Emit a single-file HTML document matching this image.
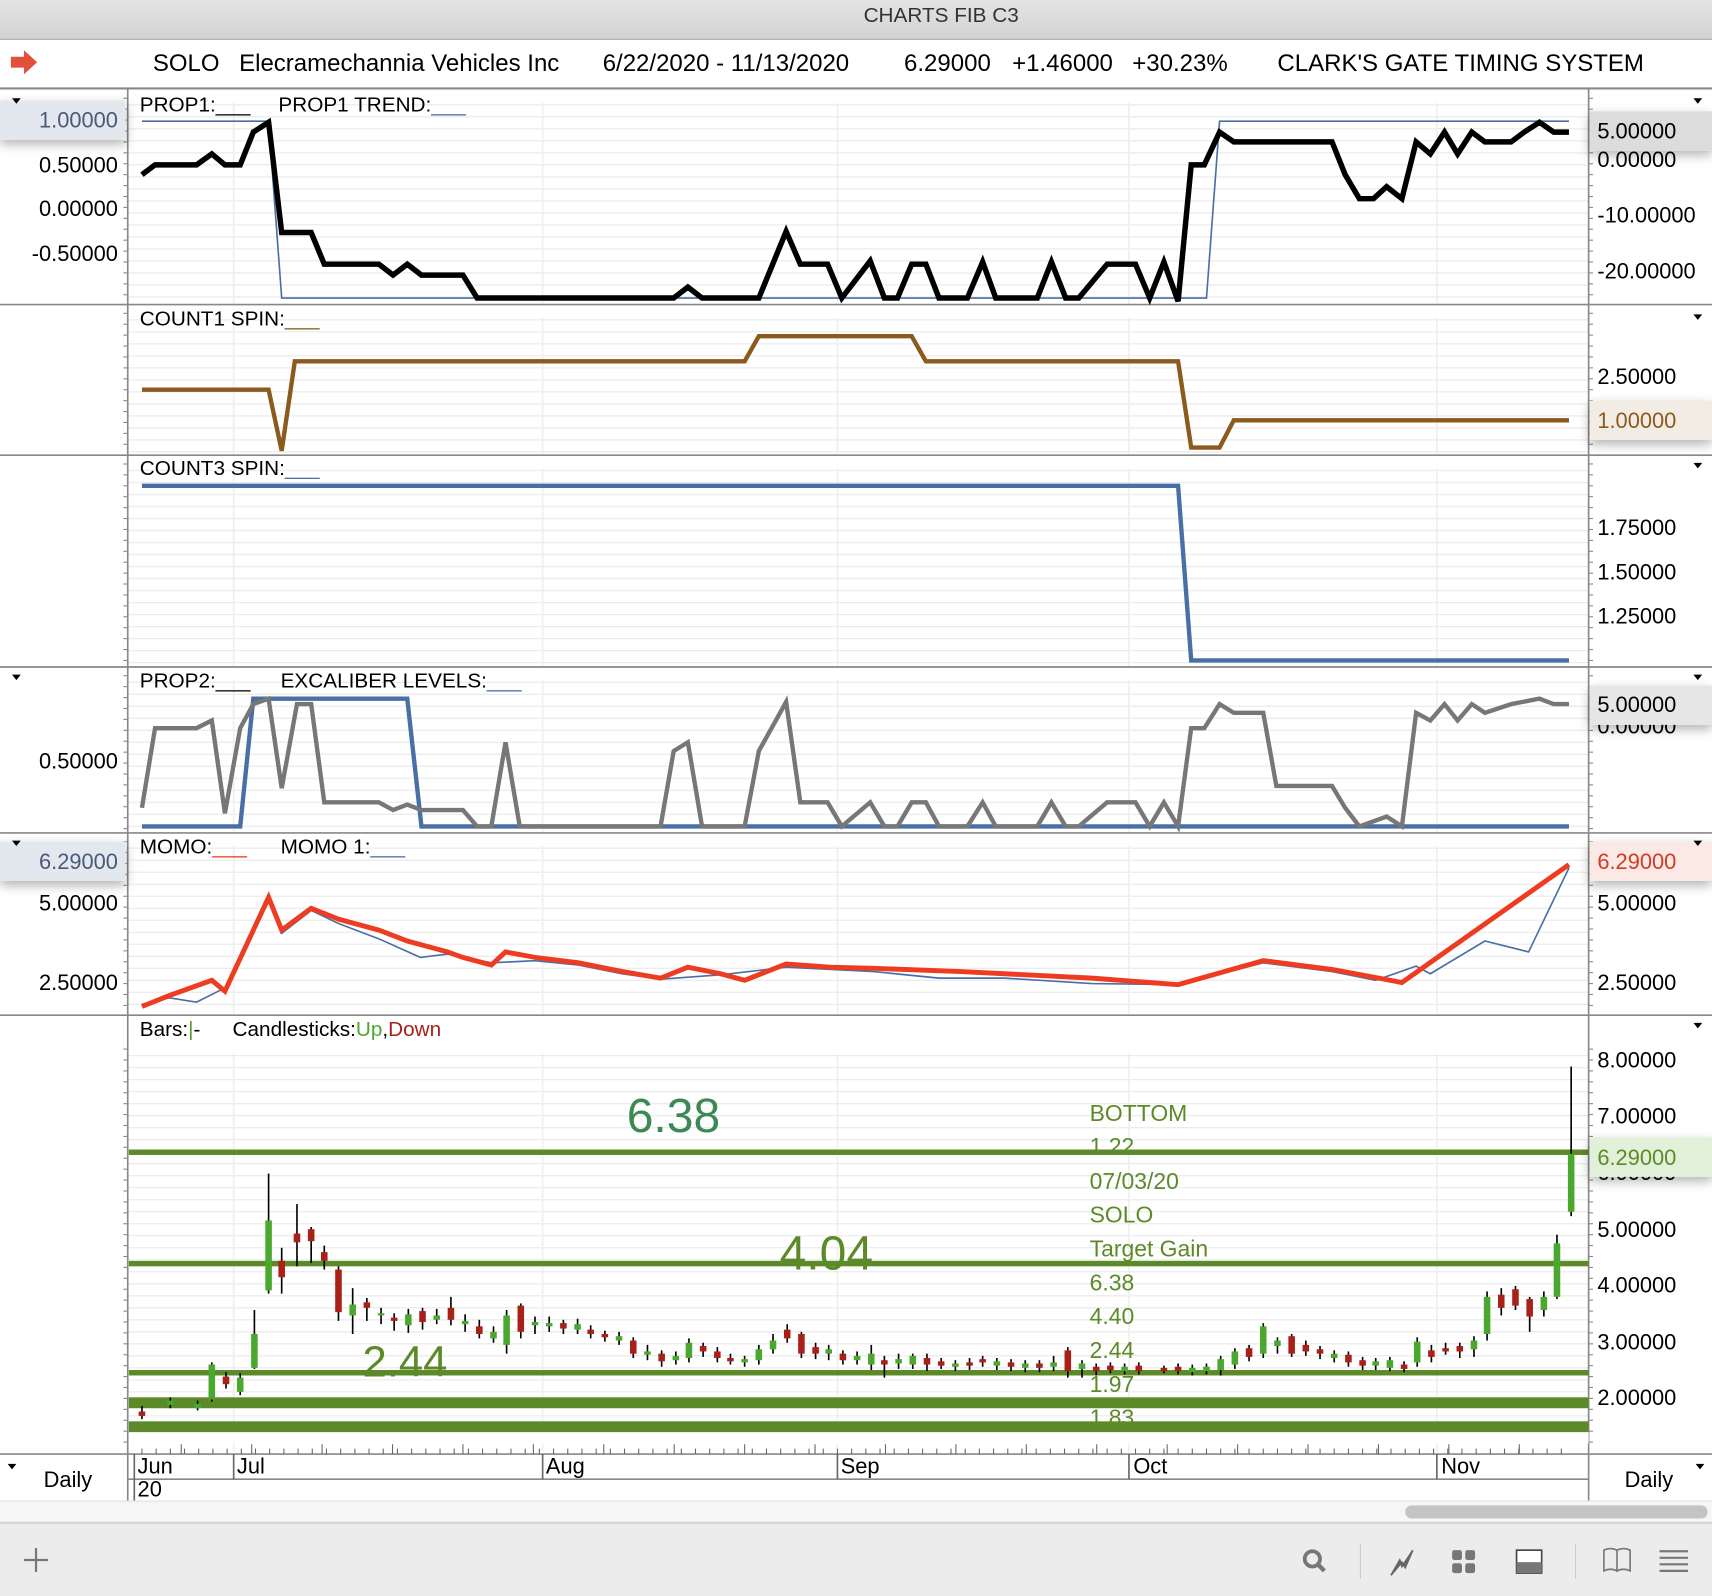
<!DOCTYPE html>
<html><head><meta charset="utf-8"><style>
html,body{margin:0;padding:0;background:#fff;overflow:hidden}
svg{display:block}
text{font-family:"Liberation Sans",sans-serif}
</style></head><body>
<svg id="s" width="1712" height="1596" viewBox="0 0 1568 1462" preserveAspectRatio="none" xmlns="http://www.w3.org/2000/svg">
<defs>
<linearGradient id="tb" x1="0" y1="0" x2="0" y2="1"><stop offset="0" stop-color="#e4e4e4"/><stop offset="1" stop-color="#d2d2d2"/></linearGradient>
<filter id="sh" x="-10%" y="-50%" width="120%" height="200%"><feDropShadow dx="0" dy="4" stdDeviation="5" flood-color="#000" flood-opacity="0.3"/></filter>
</defs>
<rect x="0" y="0" width="1568" height="36" fill="url(#tb)"/>
<line x1="0" y1="36" x2="1568" y2="36" stroke="#a8a8a8" stroke-width="1"/>
<text x="862" y="20" font-size="19" fill="#333" text-anchor="middle">CHARTS FIB C3</text>
<path d="M10 52 h12 v-6 l12 11 l-12 11 v-6 h-12z" fill="#e0503a"/>
<g font-size="22" fill="#000">
<text x="140" y="65">SOLO</text><text x="219" y="65">Elecramechannia Vehicles Inc</text>
<text x="552" y="65">6/22/2020 - 11/13/2020</text><text x="828" y="65">6.29000</text>
<text x="927" y="65">+1.46000</text><text x="1037" y="65">+30.23%</text>
<text x="1170" y="65">CLARK'S GATE TIMING SYSTEM</text></g>
<line x1="0" y1="81" x2="1568" y2="81" stroke="#888" stroke-width="2"/>
<g id="grid"></g>
<g stroke="#888" stroke-width="1.5">
<line x1="0" y1="279" x2="1568" y2="279"/><line x1="0" y1="417" x2="1568" y2="417"/>
<line x1="0" y1="611" x2="1568" y2="611"/><line x1="0" y1="763" x2="1568" y2="763"/>
<line x1="0" y1="930" x2="1568" y2="930"/>
<line x1="117" y1="82" x2="117" y2="1375"/><line x1="1455" y1="82" x2="1455" y2="1375"/>
<line x1="0" y1="1332" x2="1568" y2="1332"/><line x1="117" y1="1355" x2="1455" y2="1355"/>
</g>
<polyline fill="none" stroke="#4a6fa5" stroke-width="1.5" points="130,111 246,111 258,273 1105,273 1117,111 1437,111"/>
<polyline fill="none" stroke="#000" stroke-width="5" points="130,160 142,151 180,151 194,141 206,151 220,151 232,121 246,112 258,213 285,213 297,242 347,242 360,252 373,242 386,252 424,252 437,273 617,273 630,263 643,273 695,273 720,212 733,242 758,242 771,273 797,239 810,273 822,273 835,242 848,242 860,273 886,273 900,240 912,273 950,273 963,240 976,273 988,273 1014,242 1040,242 1053,273 1066,240 1079,276 1091,151 1103,151 1117,121 1130,130 1220,130 1232,160 1245,182 1258,182 1270,171 1284,182 1297,130 1310,141 1323,121 1335,141 1348,121 1360,130 1384,130 1396,121 1410,112 1423,121 1437,121"/>
<polyline fill="none" stroke="#8b5a1e" stroke-width="4" points="130,357 246,357 258,413 270,331 682,331 695,308 835,308 848,331 1079,331 1091,410 1117,410 1130,385 1437,385"/>
<polyline fill="none" stroke="#4a6fa5" stroke-width="4" points="130,445 1079,445 1091,605 1437,605"/>
<polyline fill="none" stroke="#4a6fa5" stroke-width="4" points="130,757 220,757 232,640 373,640 386,757 1437,757"/>
<polyline fill="none" stroke="#777" stroke-width="4" points="130,740 142,667 180,667 194,660 206,745 220,667 232,645 246,640 258,722 272,645 285,645 297,735 347,735 360,742 373,737 386,742 424,742 437,757 450,757 463,680 476,757 605,757 617,688 630,680 643,757 682,757 695,688 720,643 733,735 758,735 771,757 797,735 810,757 822,757 835,735 848,735 860,757 886,757 900,735 912,757 950,757 963,735 976,757 988,757 1014,735 1040,735 1053,757 1066,735 1079,757 1091,667 1103,667 1117,645 1130,653 1157,653 1169,720 1220,720 1232,740 1245,757 1270,748 1284,757 1297,653 1310,660 1323,645 1335,660 1348,645 1360,653 1384,645 1410,640 1423,645 1437,645"/>
<polyline fill="none" stroke="#4a6fa5" stroke-width="1.5" points="130,920 155,914 180,918 206,905 246,826 258,855 285,834 310,846 347,860 385,877 410,874 450,882 490,880 530,884 570,892 605,897 660,893 720,886 800,890 860,896 920,896 1000,901 1079,902 1157,882 1220,890 1260,898 1297,885 1310,892 1360,862 1400,872 1437,795"/>
<polyline fill="none" stroke="#ee3c22" stroke-width="4.5" points="130,922 155,912 194,898 206,908 246,822 258,852 285,832 310,842 347,852 373,862 410,872 424,877 450,884 463,872 490,877 530,882 570,890 605,896 630,886 660,892 682,898 720,883 760,886 800,887 880,890 1000,896 1040,899 1079,902 1157,880 1220,888 1284,900 1437,792"/>
<g fill="#5d8a28">
<rect x="118" y="1053" width="1337" height="5"/><rect x="118" y="1155" width="1337" height="5"/>
<rect x="118" y="1255" width="1337" height="5"/><rect x="118" y="1280" width="1337" height="10"/>
<rect x="118" y="1302" width="1337" height="10"/></g>
<text x="574" y="1037" font-size="44" fill="#3b8a55">6.38</text>
<text x="714" y="1163" font-size="44" fill="#5d8a28">4.04</text>
<text x="332" y="1261" font-size="40" fill="#5d8a28">2.44</text>
<g font-size="21" fill="#5d8a28">
<text x="998" y="1027">BOTTOM</text><text x="998" y="1057">1.22</text><text x="998" y="1089">07/03/20</text>
<text x="998" y="1120">SOLO</text><text x="998" y="1151">Target Gain</text><text x="998" y="1182">6.38</text>
<text x="998" y="1213">4.40</text><text x="998" y="1244">2.44</text><text x="998" y="1275">1.97</text>
<text x="998" y="1306">1.83</text></g>
<rect x="118" y="1312" width="1337" height="10" fill="#fff"/>
<g id="candles"></g>
<g font-size="19" fill="#000">
<text x="128" y="102">PROP1:___</text><text x="255" y="102">PROP1 TREND:<tspan fill="#4a6fa5">___</tspan></text>
<text x="128" y="298">COUNT1 SPIN:<tspan fill="#8b5a1e">___</tspan></text>
<text x="128" y="435">COUNT3 SPIN:<tspan fill="#4a6fa5">___</tspan></text>
<text x="128" y="630">PROP2:___</text><text x="257" y="630">EXCALIBER LEVELS:<tspan fill="#4a6fa5">___</tspan></text>
<text x="128" y="782">MOMO:<tspan fill="#ee3c22">___</tspan></text><text x="257" y="782">MOMO 1:<tspan fill="#4a6fa5">___</tspan></text>
<text x="128" y="949">Bars:<tspan fill="#5a9a30">|</tspan>-</text><text x="213" y="949">Candlesticks:<tspan fill="#4aa82e">Up</tspan>,<tspan fill="#a82018">Down</tspan></text>
</g>
<g font-size="20" fill="#000">
<text x="1463" y="153">0.00000</text><text x="1463" y="672">0.00000</text><text x="1463" y="1081">6.00000</text>
</g>
<rect x="0" y="92" width="115" height="36" fill="#e3e7ee" filter="url(#sh)"/>
<rect x="1456" y="102" width="112" height="36" fill="#dcdcdc" filter="url(#sh)"/>
<rect x="1456" y="367" width="112" height="36" fill="#f3ece4" filter="url(#sh)"/>
<rect x="1456" y="628" width="112" height="36" fill="#e6e6e6" filter="url(#sh)"/>
<rect x="0" y="771" width="115" height="36" fill="#e3e7ee" filter="url(#sh)"/>
<rect x="1456" y="771" width="112" height="36" fill="#fbe9e6" filter="url(#sh)"/>
<rect x="1456" y="1042" width="112" height="36" fill="#e2f0d9" filter="url(#sh)"/>
<g font-size="20" fill="#000" text-anchor="end">
<text x="108" y="117" fill="#4a5a7a">1.00000</text><text x="108" y="158">0.50000</text><text x="108" y="198">0.00000</text><text x="108" y="239">-0.50000</text>
<text x="108" y="704">0.50000</text>
<text x="108" y="796" fill="#4a5a7a">6.29000</text><text x="108" y="834">5.00000</text><text x="108" y="907">2.50000</text>
</g>
<g font-size="20" fill="#000">
<text x="1463" y="127">5.00000</text><text x="1463" y="204">-10.00000</text><text x="1463" y="255">-20.00000</text>
<text x="1463" y="352">2.50000</text><text x="1463" y="392" fill="#8b5a1e">1.00000</text>
<text x="1463" y="490">1.75000</text><text x="1463" y="531">1.50000</text><text x="1463" y="571">1.25000</text>
<text x="1463" y="652">5.00000</text>
<text x="1463" y="796" fill="#d23a24">6.29000</text><text x="1463" y="834">5.00000</text><text x="1463" y="907">2.50000</text>
<text x="1463" y="978">8.00000</text><text x="1463" y="1029">7.00000</text><text x="1463" y="1067" fill="#5d8a28">6.29000</text>
<text x="1463" y="1133">5.00000</text><text x="1463" y="1184">4.00000</text><text x="1463" y="1236">3.00000</text><text x="1463" y="1287">2.00000</text>
</g>
<g fill="#000"><path d="M11 90h8l-4 5z"/><path d="M1551 90h8l-4 5z"/><path d="M1551 288h8l-4 5z"/><path d="M1551 424h8l-4 5z"/>
<path d="M11 618h8l-4 5z"/><path d="M1551 618h8l-4 5z"/><path d="M11 770h8l-4 5z"/><path d="M1551 770h8l-4 5z"/>
<path d="M1551 937h8l-4 5z"/><path d="M7 1341h8l-4 5z"/><path d="M1553 1341h8l-4 5z"/></g>
<g id="ticks" stroke="#666" stroke-width="1"></g>
<g stroke="#666" stroke-width="1.5">
<line x1="123" y1="1332" x2="123" y2="1375"/><line x1="214" y1="1332" x2="214" y2="1355"/><line x1="497" y1="1332" x2="497" y2="1355"/>
<line x1="767" y1="1332" x2="767" y2="1355"/><line x1="1034" y1="1332" x2="1034" y2="1355"/><line x1="1316" y1="1332" x2="1316" y2="1355"/></g>
<g font-size="20" fill="#000">
<text x="126" y="1350">Jun</text><text x="126" y="1371">20</text><text x="217" y="1350">Jul</text><text x="500" y="1350">Aug</text>
<text x="770" y="1350">Sep</text><text x="1038" y="1350">Oct</text><text x="1320" y="1350">Nov</text>
<text x="40" y="1362">Daily</text><text x="1488" y="1362">Daily</text></g>
<rect x="0" y="1375" width="1568" height="20" fill="#f6f6f6"/>
<line x1="0" y1="1375" x2="1568" y2="1375" stroke="#e2e2e2"/>
<rect x="1287" y="1379" width="277" height="12" rx="6" fill="#c4c4c4"/>
<rect x="0" y="1395" width="1568" height="67" fill="#ececec"/>
<line x1="0" y1="1395" x2="1568" y2="1395" stroke="#d6d6d6" stroke-width="2"/>
<path d="M33 1418v22M22 1429h22" stroke="#777" stroke-width="2"/>
<circle cx="1202" cy="1428" r="7" fill="none" stroke="#777" stroke-width="3.5"/><path d="M1207 1433l6 6" stroke="#777" stroke-width="4"/>
<line x1="1246" y1="1414" x2="1246" y2="1446" stroke="#ccc"/><line x1="1443" y1="1414" x2="1443" y2="1446" stroke="#ccc"/>
<path d="M1274 1443l8-14 2 6 10-15-7 16-3-5z" fill="#666" stroke="#666" stroke-width="1.5"/>
<g fill="#777"><rect x="1330" y="1420" width="9" height="9" rx="2"/><rect x="1342" y="1420" width="9" height="9" rx="2"/><rect x="1330" y="1432" width="9" height="9" rx="2"/><rect x="1342" y="1432" width="9" height="9" rx="2"/></g>
<rect x="1389" y="1420" width="23" height="21" fill="#fff" stroke="#444" stroke-width="1.5"/><rect x="1389" y="1431" width="23" height="10" fill="#777"/>
<path d="M1469 1420q6-3 12 0v19q-6-3-12 0zM1481 1420q6-3 12 0v19q-6-3-12 0z" fill="none" stroke="#777" stroke-width="1.5"/>
<g stroke="#777" stroke-width="2"><line x1="1520" y1="1421" x2="1546" y2="1421"/><line x1="1520" y1="1427" x2="1546" y2="1427"/><line x1="1520" y1="1433" x2="1546" y2="1433"/><line x1="1520" y1="1439" x2="1546" y2="1439"/></g>
</svg>
<script>
var NS="http://www.w3.org/2000/svg";
function el(p,t,a){var e=document.createElementNS(NS,t);for(var k in a)e.setAttribute(k,a[k]);p.appendChild(e);return e;}
var g=document.getElementById("grid");
var panels=[[84,278],[281,416],[419,610],[613,762],[765,929],[955,1330]];
panels.forEach(function(p){for(var y=p[0]+12;y<p[1];y+=11){el(g,"line",{x1:118,x2:1455,y1:y,y2:y,stroke:"#ececec","stroke-width":1.2});}
[214,497,767,1034,1316].forEach(function(x){el(g,"line",{x1:x,x2:x,y1:p[0]+10,y2:p[1],stroke:"#efefef","stroke-width":1.5});});
for(var y=p[0]+6;y<p[1];y+=10){el(g,"line",{x1:1455,x2:1459,y1:y,y2:y,stroke:"#888","stroke-width":1});el(g,"line",{x1:113,x2:117,y1:y,y2:y,stroke:"#888","stroke-width":1});}});
var t=document.getElementById("ticks");
for(var x=130;x<1440;x+=13){el(t,"line",{x1:x,x2:x,y1:1327,y2:1332});}
for(var x=166;x<1440;x+=64.5){el(t,"line",{x1:x,x2:x,y1:1323,y2:1332});}
var C=[[130,1293,1297,0,1288,1300],[156,1283,1287,1,1280,1290],[181,1286,1290,1,1283,1292],[194,1250,1282,1,1248,1284],[207,1261,1268,0,1257,1272],[220,1262,1275,1,1258,1278],[233,1222,1253,1,1200,1254],[246,1118,1182,1,1075,1185],[258,1155,1170,0,1143,1185],[272,1130,1138,0,1103,1160],[285,1126,1137,0,1124,1157],[297,1147,1155,0,1141,1163],[310,1163,1202,0,1160,1210],[323,1195,1205,1,1180,1222],[336,1193,1198,0,1189,1210],[349,1203,1205,1,1198,1213],[361,1207,1210,0,1203,1219],[374,1204,1214,1,1199,1221],[387,1201,1211,0,1198,1218],[400,1205,1209,1,1199,1213],[413,1198,1209,0,1188,1214],[426,1210,1213,1,1204,1220],[439,1215,1222,0,1209,1226],[452,1220,1226,1,1215,1230],[464,1205,1232,1,1200,1240],[477,1196,1220,0,1194,1226],[490,1211,1214,1,1206,1222],[503,1212,1215,1,1206,1220],[516,1212,1217,0,1209,1222],[529,1213,1218,1,1208,1222],[541,1218,1222,0,1214,1226],[554,1222,1225,0,1219,1229],[567,1224,1228,1,1220,1232],[580,1228,1240,0,1225,1244],[593,1238,1241,1,1232,1246],[606,1240,1247,0,1237,1252],[619,1242,1246,1,1238,1250],[631,1230,1244,1,1226,1248],[644,1233,1238,0,1230,1243],[657,1238,1244,0,1234,1248],[669,1244,1247,0,1240,1250],[682,1245,1248,1,1242,1252],[695,1236,1246,1,1232,1250],[708,1228,1236,1,1222,1240],[721,1218,1226,0,1213,1230],[734,1222,1240,0,1220,1244],[747,1234,1240,0,1230,1245],[759,1236,1240,1,1232,1246],[772,1240,1246,0,1237,1250],[785,1242,1246,1,1238,1250],[798,1240,1250,1,1232,1255],[810,1246,1250,0,1242,1262],[823,1245,1249,1,1240,1254],[836,1242,1250,1,1240,1254],[849,1244,1250,0,1240,1256],[862,1247,1251,0,1244,1254],[875,1249,1252,1,1246,1256],[888,1248,1251,0,1244,1255],[900,1245,1248,0,1242,1252],[913,1247,1251,1,1244,1255],[926,1248,1252,0,1245,1256],[939,1249,1253,1,1246,1257],[952,1249,1253,0,1246,1257],[965,1248,1252,1,1242,1256],[978,1237,1256,0,1234,1262],[991,1249,1254,1,1246,1262],[1004,1252,1256,0,1249,1260],[1017,1251,1255,0,1248,1258],[1030,1252,1256,1,1249,1259],[1043,1251,1256,0,1248,1259],[1066,1253,1256,0,1251,1258],[1079,1252,1256,0,1249,1259],[1092,1253,1257,1,1250,1260],[1105,1252,1256,1,1249,1259],[1118,1245,1255,1,1242,1260],[1131,1238,1250,1,1235,1254],[1144,1235,1243,0,1232,1247],[1157,1215,1240,1,1212,1244],[1170,1228,1233,1,1225,1240],[1183,1224,1240,0,1222,1243],[1196,1232,1238,0,1228,1242],[1209,1236,1240,0,1233,1245],[1222,1240,1244,1,1237,1248],[1235,1241,1248,0,1238,1252],[1248,1246,1251,0,1243,1255],[1260,1247,1251,1,1244,1255],[1273,1246,1253,1,1243,1256],[1286,1250,1254,0,1247,1257],[1298,1229,1248,1,1225,1252],[1311,1237,1243,0,1232,1248],[1324,1235,1238,0,1230,1241],[1337,1233,1238,0,1230,1244],[1350,1228,1236,1,1224,1243],[1362,1188,1222,1,1183,1228],[1375,1186,1198,0,1180,1205],[1388,1181,1196,0,1178,1200],[1401,1190,1206,0,1188,1220],[1414,1188,1200,1,1183,1206],[1426,1139,1188,1,1131,1190],[1439,1057,1110,1,977,1114]];
var cg=document.getElementById("candles");
C.forEach(function(c){el(cg,"line",{x1:c[0],x2:c[0],y1:c[4],y2:c[5],stroke:"#000","stroke-width":1.5});
el(cg,"rect",{x:c[0]-3,y:c[1],width:6,height:Math.max(2,c[2]-c[1]),fill:c[3]?"#4aa82e":"#a82018"});});
</script>
</body></html>
